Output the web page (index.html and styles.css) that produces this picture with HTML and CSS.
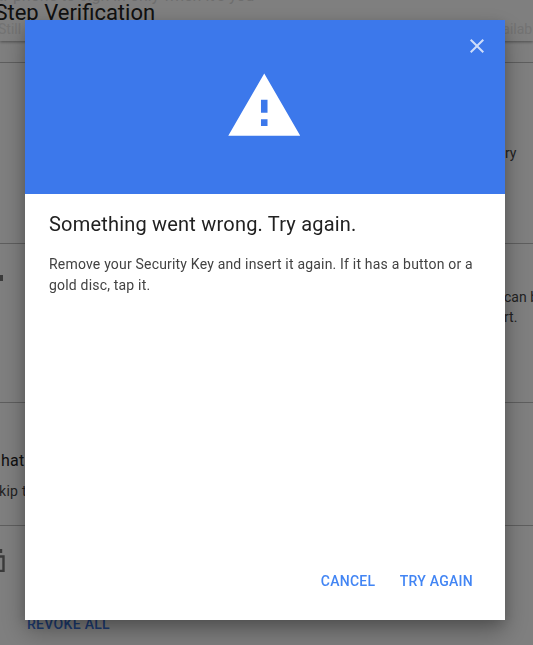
FILE: index.html
```html
<!DOCTYPE html>
<html lang="en">
<head>
<meta charset="utf-8">
<title>2-Step Verification</title>
<link rel="stylesheet" href="styles.css">
</head>
<body>
<div class="page">
  <header class="topbar">
    <div class="topbar-note">Use your phone to sign in only when it's you</div>
    <h1 class="topbar-title">2-Step Verification</h1>
    <div class="topbar-sub"><span>Still</span><span>Available</span></div>
  </header>
  <section class="row row-first">
    <p class="right-text">ry</p>
  </section>
  <section class="row row-second">
    <span class="dot"></span>
    <div class="right-lines"><p>can b</p><p>rt.</p></div>
  </section>
  <section class="row row-third">
    <p class="hat">hat</p>
    <p class="skip">kip t</p>
  </section>
  <section class="row row-fourth">
    <svg class="trash" viewBox="0 0 24 24" width="24" height="24" aria-hidden="true"><path d="M18 1v4M2 8.500h18.500v14.500H2" fill="none" stroke="#757575" stroke-width="2.400"/></svg>
    <a class="revoke">REVOKE ALL</a>
  </section>
</div>
<div class="scrim">
  <div class="dialog">
    <div class="dialog-head">
      <button class="close" aria-label="Close">
        <svg viewBox="0 0 24 24" width="24" height="24" aria-hidden="true"><path d="M19 6.41 17.59 5 12 10.59 6.41 5 5 6.41 10.59 12 5 17.59 6.41 19 12 13.41 17.59 19 19 17.59 13.41 12z"/></svg>
      </button>
      <svg class="warn" viewBox="0 0 24 24" width="78.500" height="78.500" aria-hidden="true"><path d="M1 21h22L12 2 1 21zm12-3h-2v-2h2v2zm0-4h-2v-4h2v4z"/></svg>
    </div>
    <div class="dialog-body">
      <h2 class="dialog-title">Something went wrong. Try again.</h2>
      <p class="dialog-text">Remove your Security Key and insert it again. If it has a button or a gold disc, tap it.</p>
    </div>
    <div class="dialog-actions">
      <button class="action">CANCEL</button>
      <button class="action">TRY AGAIN</button>
    </div>
  </div>
</div>
</body>
</html>
```
FILE: styles.css
```css
* { box-sizing: border-box; }
html, body { margin: 0; height: 645px; overflow: hidden; }
body { font-family: Roboto, "Liberation Sans", sans-serif; background: #fff; color: #212121; }
p, h1, h2 { margin: 0; font-weight: 400; }

.page { width: 533px; height: 645px; overflow: hidden; }

.topbar { height: 41px; background: #fff; box-shadow: 0 1px 3px rgba(0,0,0,.4); position: relative; overflow: hidden; }
.topbar-note { font-size: 16px; line-height: 20px; margin-top: -14px; margin-left: -53px; color: #dcdcdc; white-space: nowrap; }
.topbar-title { font-size: 22px; line-height: 28px; margin-left: -24px; white-space: nowrap; margin-top: -7px; }
.topbar-sub { display: flex; justify-content: space-between; font-size: 14px; line-height: 18px; color: #e6e6e6; margin: -7px -10px 0 -2px; white-space: nowrap; }

.row { border-bottom: 1px solid #bdbdbd; position: relative; }
.row-first { height: 182px; margin-top: 21px; border-top: 1px solid #bdbdbd; }
.right-text { position: absolute; left: 505px; top: 80px; font-size: 14px; line-height: 20px; color: #444; }

.row-second { height: 159px; }
.dot { display: block; width: 3px; height: 6px; background: #757575; position: absolute; left: 0; top: 31px; }
.right-lines { position: absolute; left: 504px; top: 43px; font-size: 14px; line-height: 20px; color: #444; white-space: nowrap; }

.row-third { height: 123px; padding: 47px 0 0; }
.hat { font-size: 16px; line-height: 22px; margin-left: 1px; color: #212121; letter-spacing: .3px; }
.skip { font-size: 14px; line-height: 20px; margin-top: 9px; margin-left: -1px; color: #444; letter-spacing: .3px; }

.row-fourth { height: 130px; border-bottom: 0; }
.trash { display: block; margin: 22px 0 0 -17px; }
.revoke { display: block; margin: 42px 0 0 27px; font-size: 14px; font-weight: 500; letter-spacing: .3px; line-height: 20px; color: #3b78e7; }

.scrim { position: fixed; inset: 0; background: rgba(0,0,0,.5); display: flex; align-items: center; justify-content: center; padding: 0 3px 5px 0; }
.dialog { width: 480px; height: 600px; background: #fff; display: flex; flex-direction: column; box-shadow: 0 12px 24px rgba(0,0,0,.3), 0 4px 12px rgba(0,0,0,.15); }

.dialog-head { height: 174px; flex: none; background: #3c78eb; display: flex; align-items: flex-start; justify-content: center; position: relative; padding-top: 47px; }
.warn { display: block; fill: #fff; margin-left: -1px; }
.close { position: absolute; right: 16px; top: 14px; width: 24px; height: 24px; padding: 0; border: 0; background: none; }
.close svg { display: block; fill: #fff; opacity: .75; }

.dialog-body { flex: 1; padding: 17px 24px 0; }
.dialog-title { font-size: 20px; line-height: 26px; letter-spacing: .2px; color: #212121; }
.dialog-text { font-size: 14px; line-height: 21px; letter-spacing: .19px; margin-top: 17px; color: #424242; }

.dialog-actions { display: flex; justify-content: flex-end; gap: 24.500px; padding: 0 32px 29px 0; }
.action { padding: 0; border: 0; background: none; font: 500 14px/20px Roboto, "Liberation Sans", sans-serif; letter-spacing: .25px; color: #4285f4; }
```
